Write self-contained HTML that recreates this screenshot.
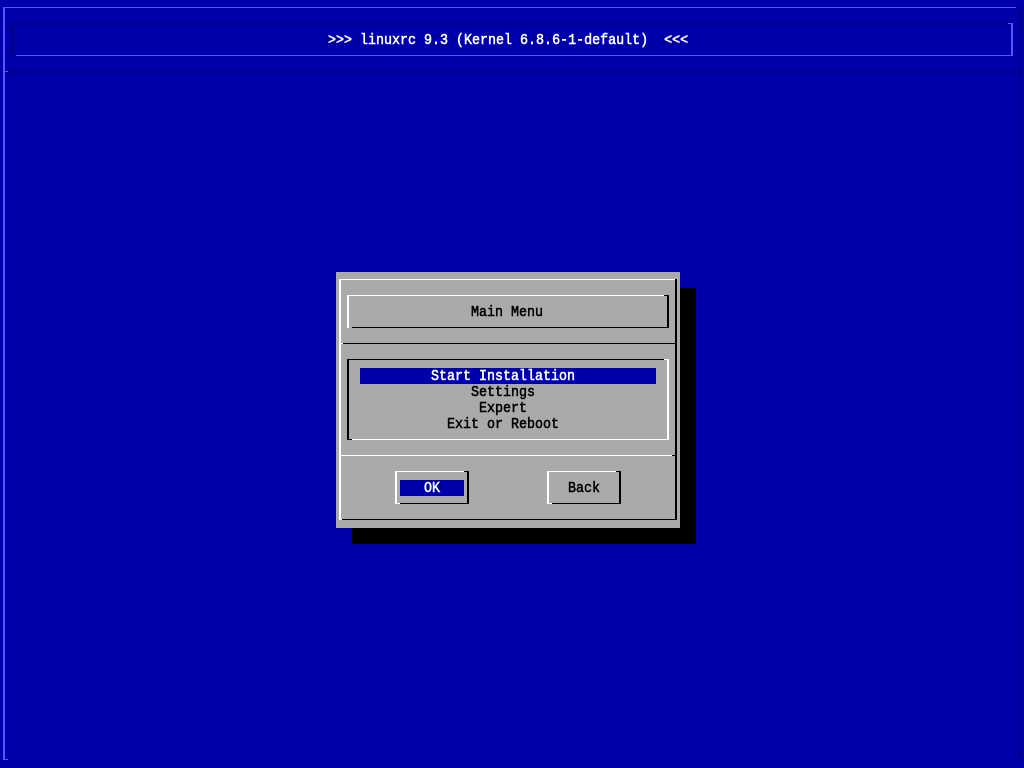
<!DOCTYPE html>
<html>
<head>
<meta charset="utf-8">
<style>
html,body{margin:0;padding:0;width:1024px;height:768px;overflow:hidden;background:#0000aa;}
#s{position:relative;width:1024px;height:768px;background:#0000aa;overflow:hidden;}
#s i{position:absolute;display:block;}
.L{background:#5555ff;}
.D{background:#00008c;box-shadow:0 0 2px #000090;}
.W{background:#fff;}
.K{background:#000;}
.t{position:absolute;height:16px;line-height:16px;font-family:"Liberation Mono",monospace;font-size:15px;font-weight:normal;-webkit-text-stroke:0.55px currentColor;white-space:pre;color:#000;transform:scaleX(0.889);transform-origin:0 0;margin-top:1px;}
.w{color:#fff;}
</style>
</head>
<body>
<div id="s">
<!-- dark frame parts first -->
<i class="D" style="left:8px;top:759px;width:1012px;height:1px"></i>
<i class="D" style="left:1019px;top:8px;width:2px;height:752px"></i>
<i class="D" style="left:8px;top:70px;width:1012px;height:2px"></i>
<i class="D" style="left:11px;top:22px;width:1000px;height:2px"></i>
<i class="D" style="left:11px;top:23px;width:3px;height:33px"></i>
<!-- light frame parts -->
<i class="L" style="left:3px;top:7px;width:1013px;height:1px"></i>
<i class="L" style="left:3px;top:7px;width:2px;height:753px"></i>
<i class="L" style="left:3px;top:759px;width:5px;height:1px"></i>
<i class="L" style="left:4px;top:71px;width:4px;height:1px"></i>
<i class="L" style="left:16px;top:55px;width:997px;height:1px"></i>
<i class="L" style="left:1011px;top:23px;width:2px;height:33px"></i>
<i class="L" style="left:1008px;top:23px;width:4px;height:1px"></i>
<div class="t w" style="left:328px;top:32px">&gt;&gt;&gt; linuxrc 9.3 (Kernel 6.8.6-1-default)  &lt;&lt;&lt;</div>

<!-- shadow and dialog -->
<i class="K" style="left:352px;top:288px;width:344px;height:256px"></i>
<i style="left:336px;top:272px;width:344px;height:256px;background:#aaa"></i>
<!-- dialog frame -->
<i class="W" style="left:339px;top:279px;width:337px;height:1px"></i>
<i class="W" style="left:339px;top:279px;width:2px;height:241px"></i>
<i class="K" style="left:342px;top:519px;width:335px;height:1px"></i>
<i class="W" style="left:339px;top:519px;width:3px;height:1px"></i>
<i class="K" style="left:675px;top:279px;width:2px;height:241px"></i>
<!-- separators -->
<i class="K" style="left:341px;top:343px;width:335px;height:1px"></i>
<i class="W" style="left:339px;top:343px;width:4px;height:1px"></i>
<i class="W" style="left:341px;top:455px;width:334px;height:1px"></i>
<i class="K" style="left:672px;top:455px;width:5px;height:1px"></i>
<!-- title box -->
<i class="W" style="left:347px;top:295px;width:318px;height:1px"></i>
<i class="W" style="left:347px;top:295px;width:2px;height:33px"></i>
<i class="K" style="left:352px;top:327px;width:317px;height:1px"></i>
<i class="K" style="left:667px;top:295px;width:2px;height:33px"></i>
<i class="K" style="left:664px;top:295px;width:4px;height:1px"></i>
<div class="t" style="left:471px;top:304px">Main Menu</div>
<!-- list box -->
<i class="K" style="left:347px;top:359px;width:318px;height:1px"></i>
<i class="K" style="left:347px;top:359px;width:2px;height:81px"></i>
<i class="K" style="left:347px;top:439px;width:5px;height:1px"></i>
<i class="W" style="left:352px;top:439px;width:317px;height:1px"></i>
<i class="W" style="left:667px;top:359px;width:2px;height:81px"></i>
<i class="W" style="left:664px;top:359px;width:4px;height:1px"></i>
<i style="left:360px;top:368px;width:296px;height:16px;background:#0000aa"></i>
<div class="t w" style="left:431px;top:368px">Start Installation</div>
<div class="t" style="left:471px;top:384px">Settings</div>
<div class="t" style="left:479px;top:400px">Expert</div>
<div class="t" style="left:447px;top:416px">Exit or Reboot</div>
<!-- OK button -->
<i class="W" style="left:395px;top:471px;width:70px;height:1px"></i>
<i class="W" style="left:395px;top:471px;width:2px;height:33px"></i>
<i class="W" style="left:395px;top:503px;width:5px;height:1px"></i>
<i class="K" style="left:400px;top:503px;width:69px;height:1px"></i>
<i class="K" style="left:467px;top:471px;width:2px;height:33px"></i>
<i class="K" style="left:464px;top:471px;width:4px;height:1px"></i>
<i style="left:400px;top:480px;width:64px;height:16px;background:#0000aa"></i>
<div class="t w" style="left:424px;top:480px">OK</div>
<!-- Back button -->
<i class="W" style="left:547px;top:471px;width:70px;height:1px"></i>
<i class="W" style="left:547px;top:471px;width:2px;height:33px"></i>
<i class="W" style="left:547px;top:503px;width:5px;height:1px"></i>
<i class="K" style="left:552px;top:503px;width:69px;height:1px"></i>
<i class="K" style="left:619px;top:471px;width:2px;height:33px"></i>
<i class="K" style="left:616px;top:471px;width:4px;height:1px"></i>
<div class="t" style="left:568px;top:480px">Back</div>
</div>
</body>
</html>
